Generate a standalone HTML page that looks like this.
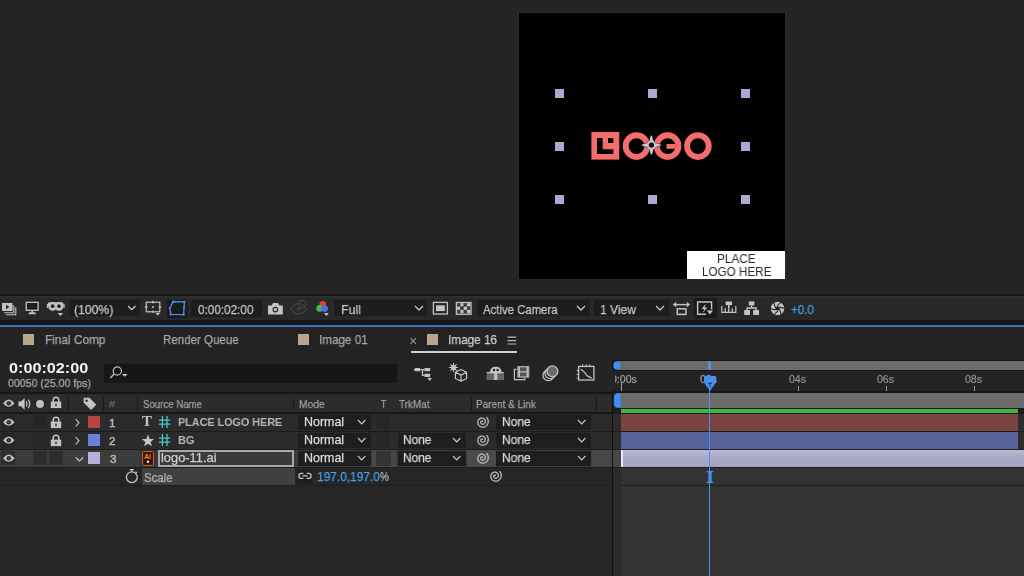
<!DOCTYPE html>
<html><head><meta charset="utf-8"><style>
html,body{margin:0;padding:0;width:1024px;height:576px;overflow:hidden;background:#242424;}
body>div,body>span,body>svg{position:absolute;display:block;}
body>span,div>span{position:absolute;display:block;white-space:pre;will-change:transform;}
</style></head><body>
<div style="left:518px;top:12px;width:268px;height:268px;background:#2a2a2a;"></div>
<div style="left:519px;top:13px;width:266px;height:266px;background:#000;"></div>
<svg style="left:588px;top:128px;" width="130" height="36" viewBox="0 0 130 36">
<g transform="translate(-588,-128)">
<rect x="591.4" y="132" width="27.85" height="27.6" fill="#f46c6c"/>
<rect x="597" y="138" width="5.7" height="16" fill="#000"/>
<rect x="597" y="149.25" width="16.3" height="4.75" fill="#000"/>
<rect x="608" y="138.2" width="5.3" height="4.8" fill="#000"/>
<circle cx="636.5" cy="146.1" r="10.85" fill="none" stroke="#f46c6c" stroke-width="5.9"/>
<circle cx="667.6" cy="146.1" r="10.85" fill="none" stroke="#f46c6c" stroke-width="5.9"/>
<rect x="666.5" y="144.0" width="9" height="4.8" fill="#f46c6c"/>
<circle cx="697.9" cy="146.1" r="10.85" fill="none" stroke="#f46c6c" stroke-width="5.9"/>
</g></svg>
<svg style="left:641px;top:135px;" width="22" height="22" viewBox="0 0 22 22">
<g transform="translate(10.4,10.1)">
<path d="M-2.40,-3.20 L-0.90,-9.50 L0.90,-9.50 L2.40,-3.20 L3.20,-2.40 L9.50,-0.90 L9.50,0.90 L3.20,2.40 L2.40,3.20 L0.90,9.50 L-0.90,9.50 L-2.40,3.20 L-3.20,2.40 L-9.50,0.90 L-9.50,-0.90 L-3.20,-2.40 Z" fill="#c9c9d4" stroke="#000" stroke-opacity="0.5" stroke-width="0.8"/>
<circle cx="0" cy="0" r="4.3" fill="#c9c9d4"/>
<circle cx="0" cy="0" r="2.7" fill="#141414"/>
</g></svg>
<div style="left:555px;top:89px;width:9px;height:9px;background:#aaaad2;"></div>
<div style="left:555px;top:142px;width:9px;height:9px;background:#aaaad2;"></div>
<div style="left:555px;top:195px;width:9px;height:9px;background:#aaaad2;"></div>
<div style="left:648px;top:89px;width:9px;height:9px;background:#aaaad2;"></div>
<div style="left:648px;top:195px;width:9px;height:9px;background:#aaaad2;"></div>
<div style="left:741px;top:89px;width:9px;height:9px;background:#aaaad2;"></div>
<div style="left:741px;top:142px;width:9px;height:9px;background:#aaaad2;"></div>
<div style="left:741px;top:195px;width:9px;height:9px;background:#aaaad2;"></div>
<div style="left:687px;top:251px;width:98px;height:28px;background:#ffffff;"></div>
<span style="left:717.26px;top:253.22px;font-family:'Liberation Sans', sans-serif;font-size:12.03px;line-height:12.03px;font-weight:400;color:#2a2a2a;transform:scaleX(0.9776);transform-origin:0 0;">PLACE</span>
<span style="left:701.86px;top:267.44px;font-family:'Liberation Sans', sans-serif;font-size:11.88px;line-height:11.88px;font-weight:400;color:#2a2a2a;transform:scaleX(0.9838);transform-origin:0 0;">LOGO HERE</span>
<div style="left:0px;top:294px;width:1024px;height:2px;background:#161616;"></div>
<div style="left:0px;top:296px;width:1024px;height:24px;background:#282828;"></div>
<div style="left:0px;top:296px;width:1024px;height:2px;background:#2e2e2e;"></div>
<div style="left:0px;top:320px;width:1024px;height:5px;background:#1a171c;"></div>
<div style="left:0px;top:325px;width:1024px;height:2px;background:#3b70ba;"></div>
<svg style="left:1px;top:302px;" width="17" height="14" viewBox="0 0 17 14">
<rect x="1" y="1" width="10.5" height="8" fill="#c4c4c4"/>
<path d="M5,2.8 L8.5,5 L5,7.2 Z" fill="#262626"/>
<path d="M12.8,3.2 V10.8 H3.2" fill="none" stroke="#c4c4c4" stroke-width="1.1"/>
<path d="M14.8,5.2 V12.8 H5.2" fill="none" stroke="#c4c4c4" stroke-width="1.1"/>
</svg>
<svg style="left:25px;top:301px;" width="15" height="14" viewBox="0 0 15 14">
<rect x="1.3" y="1.3" width="11.8" height="8" fill="#1e1e1e" stroke="#c4c4c4" stroke-width="1.3"/>
<rect x="6.4" y="9.6" width="1.6" height="1.6" fill="#c4c4c4"/>
<path d="M3.4,13.2 Q3.4,10.9 7.2,10.9 Q11,10.9 11,13.2 Z" fill="#c4c4c4"/>
</svg>
<svg style="left:46px;top:301px;" width="19" height="16" viewBox="0 0 19 16">
<rect x="1.6" y="1.2" width="16" height="4.6" rx="2" fill="#c4c4c4"/>
<circle cx="6.6" cy="5.4" r="4.3" fill="#c4c4c4"/><circle cx="13" cy="5.4" r="4.3" fill="#c4c4c4"/>
<rect x="0.9" y="3" width="1.2" height="4" rx="0.6" fill="#c4c4c4"/><rect x="17.4" y="3" width="1.2" height="4" rx="0.6" fill="#c4c4c4"/>
<circle cx="6.6" cy="5.2" r="1.9" fill="#282828"/><circle cx="13" cy="5.2" r="1.9" fill="#282828"/>
<path d="M11.6,12.1 h5.4 l-2.7,3z" fill="#c4c4c4"/>
</svg>
<div style="left:69px;top:300px;width:71px;height:16px;background:#1d1d1d;"></div>
<span style="left:74.47px;top:302.75px;font-family:'Liberation Sans', sans-serif;font-size:13.29px;line-height:13.29px;font-weight:400;color:#c9c9c9;transform:scaleX(0.9178);transform-origin:0 0;-webkit-text-stroke:0.25px #c9c9c9;">(100%)</span>
<svg style="left:126.75px;top:304.70000000000005px;" width="9.5" height="5.8" viewBox="0 0 9.5 5.8"><polyline points="1,1 4.75,4.8 8.5,1" fill="none" stroke="#c8c8c8" stroke-width="1.3"/></svg>
<svg style="left:144px;top:300px;" width="19" height="17" viewBox="0 0 19 17">
<rect x="2.3" y="2.2" width="13.5" height="9.6" fill="none" stroke="#c4c4c4" stroke-width="1.2"/>
<circle cx="9" cy="7" r="1" fill="#c4c4c4"/>
<rect x="8.3" y="0.8" width="1.4" height="2.6" fill="#c4c4c4"/><rect x="8.3" y="10.6" width="1.4" height="2.4" fill="#c4c4c4"/>
<rect x="0.8" y="6.3" width="2.6" height="1.4" fill="#c4c4c4"/><rect x="14.6" y="6.3" width="2.6" height="1.4" fill="#c4c4c4"/>
<path d="M11.6,13 h4.4 l-2.2,2.8z" fill="#c4c4c4"/>
</svg>
<div style="left:167px;top:300px;width:21px;height:18px;background:#1b1b1b;"></div>
<svg style="left:168px;top:300px;" width="19" height="17" viewBox="0 0 19 17">
<path d="M5.25,1.6 L16.4,1.9 L15.6,14.6 L2.8,14.4 L1.8,8 Z" fill="none" stroke="#4a8ff0" stroke-width="1.3" stroke-linejoin="round"/>
<circle cx="5.25" cy="1.6" r="1.2" fill="#4a8ff0"/><circle cx="16.4" cy="1.9" r="1.2" fill="#4a8ff0"/>
<circle cx="15.6" cy="14.6" r="1.2" fill="#4a8ff0"/><circle cx="2.8" cy="14.4" r="1.2" fill="#4a8ff0"/>
<circle cx="16" cy="7.5" r="1.1" fill="#4a8ff0"/><circle cx="1.8" cy="8" r="1.1" fill="#4a8ff0"/>
</svg>
<div style="left:191px;top:300px;width:71px;height:17px;background:#1d1d1d;"></div>
<span style="left:198.43px;top:302.75px;font-family:'Liberation Sans', sans-serif;font-size:13.29px;line-height:13.29px;font-weight:400;color:#c9c9c9;transform:scaleX(0.8822);transform-origin:0 0;-webkit-text-stroke:0.25px #c9c9c9;">0:00:02:00</span>
<svg style="left:267px;top:302px;" width="17" height="14" viewBox="0 0 17 14">
<path d="M1,3.4 H4.6 L6,1 H11 L12.4,3.4 H15.8 V12.5 H1 Z" fill="#c4c4c4"/>
<circle cx="8.4" cy="7.6" r="2.9" fill="#262626"/><circle cx="8.4" cy="7.6" r="1.7" fill="#c4c4c4"/>
</svg>
<svg style="left:289px;top:299px;" width="19" height="16" viewBox="0 0 19 16">
<path d="M1.5,10 Q5.5,4.8 9.5,4.8 Q13.5,4.8 17.5,10 Q13.5,15 9.5,15 Q5.5,15 1.5,10 Z" fill="none" stroke="#3e3e3e" stroke-width="1.6"/>
<circle cx="9.5" cy="10" r="2" fill="#3e3e3e"/>
<circle cx="13" cy="5" r="3.8" fill="none" stroke="#3e3e3e" stroke-width="1.6"/>
</svg>
<svg style="left:315px;top:300px;" width="16" height="17" viewBox="0 0 16 17">
<circle cx="7.7" cy="4.2" r="3.3" fill="#e83c3c"/>
<circle cx="4.6" cy="8.4" r="3.3" fill="#3cc23c"/>
<circle cx="9.6" cy="8.6" r="3.4" fill="#4d6ff0"/>
<path d="M9,13 h4.8 l-2.4,2.9z" fill="#c4c4c4"/>
</svg>
<div style="left:334px;top:300px;width:93px;height:16px;background:#1d1d1d;"></div>
<span style="left:340.61px;top:302.59px;font-family:'Liberation Sans', sans-serif;font-size:13.48px;line-height:13.48px;font-weight:400;color:#c9c9c9;transform:scaleX(0.9217);transform-origin:0 0;-webkit-text-stroke:0.25px #c9c9c9;">Full</span>
<svg style="left:413.6px;top:304.8px;" width="10" height="6" viewBox="0 0 10 6"><polyline points="1,1 5.0,5 9,1" fill="none" stroke="#c8c8c8" stroke-width="1.3"/></svg>
<svg style="left:432px;top:301px;" width="17" height="15" viewBox="0 0 17 15">
<rect x="1.4" y="1.4" width="14" height="11.6" fill="none" stroke="#c4c4c4" stroke-width="1.3"/>
<rect x="4" y="4.3" width="8.8" height="5.8" fill="#c4c4c4"/>
</svg>
<svg style="left:455px;top:301px;" width="18" height="16" viewBox="0 0 18 16">
<rect x="2.10" y="2.20" width="3.3" height="3.35" fill="#3c3c3c"/><rect x="2.10" y="5.55" width="3.3" height="3.35" fill="#c4c4c4"/><rect x="2.10" y="8.90" width="3.3" height="3.35" fill="#3c3c3c"/><rect x="5.40" y="2.20" width="3.3" height="3.35" fill="#c4c4c4"/><rect x="5.40" y="5.55" width="3.3" height="3.35" fill="#3c3c3c"/><rect x="5.40" y="8.90" width="3.3" height="3.35" fill="#c4c4c4"/><rect x="8.70" y="2.20" width="3.3" height="3.35" fill="#3c3c3c"/><rect x="8.70" y="5.55" width="3.3" height="3.35" fill="#c4c4c4"/><rect x="8.70" y="8.90" width="3.3" height="3.35" fill="#3c3c3c"/><rect x="12.00" y="2.20" width="3.3" height="3.35" fill="#c4c4c4"/><rect x="12.00" y="5.55" width="3.3" height="3.35" fill="#3c3c3c"/><rect x="12.00" y="8.90" width="3.3" height="3.35" fill="#c4c4c4"/>
<rect x="1.4" y="1.5" width="14.6" height="11.8" fill="none" stroke="#c4c4c4" stroke-width="1.3"/>
</svg>
<div style="left:477px;top:300px;width:112px;height:16px;background:#1d1d1d;"></div>
<span style="left:483.40px;top:302.59px;font-family:'Liberation Sans', sans-serif;font-size:13.48px;line-height:13.48px;font-weight:400;color:#c9c9c9;transform:scaleX(0.8444);transform-origin:0 0;-webkit-text-stroke:0.25px #c9c9c9;">Active Camera</span>
<svg style="left:575.8px;top:304.8px;" width="10" height="6" viewBox="0 0 10 6"><polyline points="1,1 5.0,5 9,1" fill="none" stroke="#c8c8c8" stroke-width="1.3"/></svg>
<div style="left:594px;top:300px;width:75px;height:16px;background:#1d1d1d;"></div>
<span style="left:599.70px;top:302.59px;font-family:'Liberation Sans', sans-serif;font-size:13.48px;line-height:13.48px;font-weight:400;color:#c9c9c9;transform:scaleX(0.8924);transform-origin:0 0;-webkit-text-stroke:0.25px #c9c9c9;">1 View</span>
<svg style="left:654.7px;top:304.8px;" width="10" height="6" viewBox="0 0 10 6"><polyline points="1,1 5.0,5 9,1" fill="none" stroke="#c8c8c8" stroke-width="1.3"/></svg>
<svg style="left:672px;top:301px;" width="20" height="16" viewBox="0 0 20 16">
<path d="M3,3.6 H16" stroke="#c4c4c4" stroke-width="1.4"/>
<path d="M0.8,3.6 L4.2,0.9 V6.3 Z M18.2,3.6 L14.8,0.9 V6.3 Z" fill="#c4c4c4"/>
<rect x="5.3" y="7.8" width="8.6" height="5.6" fill="none" stroke="#c4c4c4" stroke-width="1.5"/>
</svg>
<div style="left:694px;top:298px;width:23px;height:20px;background:#1b1b1b;"></div>
<svg style="left:696px;top:300px;" width="18" height="16" viewBox="0 0 18 16">
<path d="M15.6,9.5 V2 H1.6 V14.2 H10" fill="none" stroke="#c4c4c4" stroke-width="1.4"/>
<path d="M9.8,3.8 L5.6,9 H8.4 L6.8,12.8 L11.4,7.4 H8.6 Z" fill="#c4c4c4"/>
<path d="M10.8,10.6 h6.2 l-3.1,3.8z" fill="#c4c4c4"/>
</svg>
<svg style="left:720px;top:300px;" width="18" height="14" viewBox="0 0 18 14">
<path d="M1.8,6 V12.3 H15.8 V6" fill="none" stroke="#c4c4c4" stroke-width="1.2"/>
<rect x="5.6" y="1.5" width="6.4" height="3.6" fill="#c4c4c4"/>
<rect x="8" y="5" width="1.6" height="3" fill="#c4c4c4"/>
<rect x="4.6" y="8.2" width="1.3" height="4" fill="#c4c4c4"/><rect x="8.1" y="8.2" width="1.3" height="4" fill="#c4c4c4"/><rect x="11.6" y="8.2" width="1.3" height="4" fill="#c4c4c4"/>
</svg>
<svg style="left:743px;top:300px;" width="18" height="17" viewBox="0 0 18 17">
<rect x="5.8" y="1.4" width="5.6" height="4" fill="#c4c4c4"/>
<path d="M8.6,5.4 V8 M4,10 V8 H13.2 V10" fill="none" stroke="#c4c4c4" stroke-width="1.3"/>
<rect x="1.2" y="10" width="5.8" height="5" fill="#c4c4c4"/><rect x="10.2" y="10" width="5.8" height="5" fill="#c4c4c4"/>
</svg>
<svg style="left:770px;top:301px;" width="16" height="16" viewBox="0 0 16 16">
<circle cx="7.5" cy="7.5" r="6.7" fill="#c4c4c4"/>
<path d="M9.43,8.02 Q10.83,10.68 10.90,13.39" fill="none" stroke="#262626" stroke-width="1.1"/><path d="M8.02,9.43 Q6.41,11.97 4.10,13.39" fill="none" stroke="#262626" stroke-width="1.1"/><path d="M6.09,8.91 Q3.09,8.80 0.70,7.50" fill="none" stroke="#262626" stroke-width="1.1"/><path d="M5.57,6.98 Q4.17,4.32 4.10,1.61" fill="none" stroke="#262626" stroke-width="1.1"/><path d="M6.98,5.57 Q8.59,3.03 10.90,1.61" fill="none" stroke="#262626" stroke-width="1.1"/><path d="M8.91,6.09 Q11.91,6.20 14.30,7.50" fill="none" stroke="#262626" stroke-width="1.1"/>
<circle cx="7.5" cy="7.5" r="2.1" fill="#262626"/>
</svg>
<span style="left:791.22px;top:302.75px;font-family:'Liberation Sans', sans-serif;font-size:13.29px;line-height:13.29px;font-weight:400;color:#4a9ff0;transform:scaleX(0.8682);transform-origin:0 0;-webkit-text-stroke:0.25px #4a9ff0;">+0.0</span>
<div style="left:0px;top:327px;width:1024px;height:38px;background:#232323;"></div>
<div style="left:23px;top:334px;width:11px;height:11px;background:#b9a78b;"></div>
<span style="left:45.05px;top:333.60px;font-family:'Liberation Sans', sans-serif;font-size:12.75px;line-height:12.75px;font-weight:400;color:#a9a9a9;transform:scaleX(0.9271);transform-origin:0 0;-webkit-text-stroke:0.25px #a9a9a9;">Final Comp</span>
<span style="left:163.48px;top:333.60px;font-family:'Liberation Sans', sans-serif;font-size:12.75px;line-height:12.75px;font-weight:400;color:#a9a9a9;transform:scaleX(0.9059);transform-origin:0 0;-webkit-text-stroke:0.25px #a9a9a9;">Render Queue</span>
<div style="left:298px;top:334px;width:11px;height:11px;background:#b9a78b;"></div>
<span style="left:319.25px;top:333.60px;font-family:'Liberation Sans', sans-serif;font-size:12.75px;line-height:12.75px;font-weight:400;color:#a9a9a9;transform:scaleX(0.9172);transform-origin:0 0;-webkit-text-stroke:0.25px #a9a9a9;">Image 01</span>
<svg style="left:409px;top:337px;" width="9" height="8" viewBox="0 0 9 8"><path d="M1.5,1.2 L7,6.8 M7,1.2 L1.5,6.8" stroke="#9a9a9a" stroke-width="1.1"/></svg>
<div style="left:427px;top:334px;width:11px;height:11px;background:#b9a78b;"></div>
<span style="left:448.34px;top:333.60px;font-family:'Liberation Sans', sans-serif;font-size:12.75px;line-height:12.75px;font-weight:400;color:#d0d0d0;transform:scaleX(0.9219);transform-origin:0 0;-webkit-text-stroke:0.25px #d0d0d0;">Image 16</span>
<svg style="left:507px;top:336px;" width="10" height="9" viewBox="0 0 10 9"><path d="M0.5,1.2 H9.2 M0.5,4.6 H9.2 M0.5,8 H9.2" stroke="#b8b8b8" stroke-width="1.2"/></svg>
<div style="left:411px;top:351px;width:106px;height:2px;background:#cfcfcf;"></div>
<span style="left:9.35px;top:360.18px;font-family:'Liberation Sans', sans-serif;font-size:15.14px;line-height:15.14px;font-weight:700;color:#f2f2f2;transform:scaleX(1.0709);transform-origin:0 0;">0:00:02:00</span>
<span style="left:7.58px;top:377.70px;font-family:'Liberation Sans', sans-serif;font-size:11.57px;line-height:11.57px;font-weight:400;color:#ababab;transform:scaleX(0.9161);transform-origin:0 0;-webkit-text-stroke:0.25px #ababab;">00050 (25.00 fps)</span>
<div style="left:104px;top:364px;width:293px;height:19px;background:#161616;"></div>
<svg style="left:108px;top:365px;" width="22" height="16" viewBox="0 0 22 16">
<circle cx="9.3" cy="6" r="4.1" fill="none" stroke="#bdbdbd" stroke-width="1.2"/>
<path d="M6.3,9 L2.3,13" stroke="#bdbdbd" stroke-width="1.5"/>
<path d="M13.6,9 h6.2 l-3.1,2.7z" fill="#bdbdbd"/>
</svg>
<svg style="left:412px;top:365px;" width="22" height="18" viewBox="0 0 22 18">
<path d="M1.6,4.7 L3.4,3.1 H8 V6.3 H3.4 Z" fill="#c4c4c4"/>
<path d="M8,4.7 H12.4 M10.5,4.7 V10.3 H12.4" fill="none" stroke="#c4c4c4" stroke-width="1.3"/>
<rect x="12.4" y="3.1" width="5.8" height="3.2" rx="0.6" fill="#c4c4c4"/>
<rect x="12.4" y="8.7" width="5.8" height="3.2" rx="0.6" fill="#c4c4c4"/>
<path d="M15.4,13 h4.6 l-2.3,3z" fill="#c4c4c4"/>
</svg>
<svg style="left:448px;top:362px;" width="21" height="21" viewBox="0 0 21 21">
<g stroke="#c4c4c4" stroke-width="1.1"><path d="M5.5,1 V10 M1,5.5 H10 M2.3,2.3 L8.7,8.7 M8.7,2.3 L2.3,8.7"/></g>
<circle cx="5.5" cy="5.5" r="2.6" fill="#c4c4c4"/>
<path d="M13,7.5 L18.6,10.3 V16.5 L13,19.3 L7.4,16.5 V10.3 Z M7.4,10.3 L13,13.1 L18.6,10.3 M13,13.1 V19.3" fill="#232323" stroke="#c4c4c4" stroke-width="1.2" stroke-linejoin="round"/>
</svg>
<svg style="left:485px;top:365px;" width="20" height="17" viewBox="0 0 20 17">
<path d="M5,7.6 Q5,1.8 10.8,1.8 Q16.6,1.8 16.6,7.6 Z" fill="#c4c4c4"/>
<circle cx="9" cy="5" r="1.2" fill="#232323"/><circle cx="12.6" cy="5" r="1.2" fill="#232323"/>
<rect x="1.8" y="7" width="17" height="1.6" fill="#c4c4c4"/>
<rect x="1.6" y="9.2" width="17.4" height="5.8" fill="#6e6e6e"/>
<path d="M3,9.2 V15 M5,9.2 V15 M7,9.2 V15 M14.6,9.2 V15 M16.6,9.2 V15" stroke="#5a5a5a" stroke-width="0.8"/>
<rect x="9.2" y="7.6" width="3" height="7.4" fill="#c4c4c4"/>
</svg>
<svg style="left:513px;top:364px;" width="19" height="18" viewBox="0 0 19 18">
<path d="M3.3,5.3 H1.4 V15.6 H11.8 V14" fill="none" stroke="#c4c4c4" stroke-width="1.2"/>
<rect x="4.3" y="2.2" width="12" height="11.4" fill="#c4c4c4"/>
<rect x="7" y="3.3" width="6.6" height="4" fill="#555"/><rect x="7" y="8.5" width="6.6" height="4" fill="#555"/>
<path d="M5.2,3.6 v9 M15.3,3.6 v9" stroke="#666" stroke-width="0.9" stroke-dasharray="1,1"/>
</svg>
<svg style="left:541px;top:364px;" width="19" height="18" viewBox="0 0 19 18">
<circle cx="7.4" cy="11.3" r="5.4" fill="#232323" stroke="#c4c4c4" stroke-width="1.3"/>
<circle cx="9.4" cy="9.3" r="5.4" fill="#232323" stroke="#c4c4c4" stroke-width="1.3"/>
<circle cx="11.4" cy="7.3" r="5.4" fill="#6b6b6b" stroke="#c4c4c4" stroke-width="1.3"/>
</svg>
<svg style="left:576px;top:363px;" width="21" height="19" viewBox="0 0 21 19">
<rect x="2.6" y="3.4" width="15.3" height="13.6" fill="none" stroke="#c4c4c4" stroke-width="1.3"/>
<path d="M4.6,6.6 C9,6.6 9.5,14.8 15.8,14.8" fill="none" stroke="#c4c4c4" stroke-width="1.2"/>
<path d="M6.6,1.2 v2 M10.2,1.2 v2 M13.8,1.2 v2 M0.6,7.6 h2 M0.6,11.4 h2 M0.6,15 h2" stroke="#c4c4c4" stroke-width="1"/>
</svg>
<div style="left:0px;top:392px;width:612px;height:2px;background:#161616;"></div>
<div style="left:0px;top:394px;width:612px;height:18px;background:#2b2b2b;"></div>
<div style="left:0px;top:412px;width:612px;height:2px;background:#161616;"></div>
<svg style="left:1px;top:398px;" width="15" height="11" viewBox="0 0 15 11">
<path d="M2,5.2 Q5,1.6 7.8,1.6 Q10.6,1.6 13.6,5.2 Q10.6,8.8 7.8,8.8 Q5,8.8 2,5.2 Z" fill="#c4c4c4"/>
<circle cx="7.8" cy="5.2" r="2.3" fill="#2b2b2b"/><circle cx="7.8" cy="5.2" r="0.6" fill="#777"/>
</svg>
<svg style="left:17px;top:397px;" width="15" height="14" viewBox="0 0 15 14">
<path d="M1.5,4.6 H4 L7.6,1 V12.8 L4,9.2 H1.5 Z" fill="#c4c4c4"/>
<path d="M9.2,4.4 Q10.8,6.9 9.2,9.4 M11.2,2.6 Q14.2,6.9 11.2,11.2" fill="none" stroke="#c4c4c4" stroke-width="1.2"/>
</svg>
<svg style="left:35px;top:399px;" width="10" height="10" viewBox="0 0 10 10"><circle cx="5" cy="4.9" r="3.9" fill="#c4c4c4"/></svg>
<svg style="left:50px;top:396px;" width="12" height="13" viewBox="0 0 12 13">
<path d="M3.2,6 V4.1 Q3.2,1.2 6,1.2 Q8.8,1.2 8.8,4.1 V6" fill="none" stroke="#c4c4c4" stroke-width="1.5"/>
<rect x="0.8" y="5.6" width="10.4" height="6.5" fill="#c4c4c4"/>
<rect x="5.3" y="7.6" width="1.4" height="2.6" fill="#2b2b2b"/>
</svg>
<div style="left:68px;top:397px;width:1px;height:14px;background:#1a1a1a;"></div>
<svg style="left:82px;top:396px;" width="16" height="15" viewBox="0 0 16 15">
<path d="M1.6,1.8 H7.4 L14.3,8.7 L9,14 L1.6,6.6 Z" fill="#c4c4c4"/>
<circle cx="4.6" cy="4.8" r="1.2" fill="#2b2b2b"/>
</svg>
<div style="left:103px;top:397px;width:1px;height:14px;background:#1a1a1a;"></div>
<span style="left:108.64px;top:399.55px;font-family:'Liberation Sans', sans-serif;font-size:9.28px;line-height:9.28px;font-weight:400;color:#6a6a6a;transform:scaleX(1.2463);transform-origin:0 0;-webkit-text-stroke:0.25px #6a6a6a;">#</span>
<div style="left:137px;top:397px;width:1px;height:14px;background:#1a1a1a;"></div>
<span style="left:143.32px;top:398.66px;font-family:'Liberation Sans', sans-serif;font-size:11.45px;line-height:11.45px;font-weight:400;color:#a2a2a2;transform:scaleX(0.8430);transform-origin:0 0;-webkit-text-stroke:0.25px #a2a2a2;">Source Name</span>
<div style="left:293px;top:397px;width:1px;height:14px;background:#1a1a1a;"></div>
<span style="left:299.18px;top:398.66px;font-family:'Liberation Sans', sans-serif;font-size:11.45px;line-height:11.45px;font-weight:400;color:#a2a2a2;transform:scaleX(0.8973);transform-origin:0 0;-webkit-text-stroke:0.25px #a2a2a2;">Mode</span>
<span style="left:381.02px;top:398.66px;font-family:'Liberation Sans', sans-serif;font-size:11.45px;line-height:11.45px;font-weight:400;color:#a2a2a2;transform:scaleX(0.7662);transform-origin:0 0;-webkit-text-stroke:0.25px #a2a2a2;">T</span>
<span style="left:399.20px;top:398.66px;font-family:'Liberation Sans', sans-serif;font-size:11.45px;line-height:11.45px;font-weight:400;color:#a2a2a2;transform:scaleX(0.8705);transform-origin:0 0;-webkit-text-stroke:0.25px #a2a2a2;">TrkMat</span>
<div style="left:471px;top:397px;width:1px;height:14px;background:#1a1a1a;"></div>
<span style="left:476.10px;top:398.66px;font-family:'Liberation Sans', sans-serif;font-size:11.45px;line-height:11.45px;font-weight:400;color:#a2a2a2;transform:scaleX(0.8712);transform-origin:0 0;-webkit-text-stroke:0.25px #a2a2a2;">Parent &amp; Link</span>
<div style="left:596px;top:397px;width:1px;height:14px;background:#1a1a1a;"></div>
<div style="left:0px;top:414px;width:612px;height:17px;background:#2b2b2b;"></div>
<div style="left:0px;top:431px;width:612px;height:1px;background:#1c1c1c;"></div>
<div style="left:1px;top:415px;width:14px;height:14px;background:#262626;"></div>
<svg style="left:1px;top:417px;" width="15" height="11" viewBox="0 0 15 11">
<path d="M2,5.2 Q5,1.6 7.8,1.6 Q10.6,1.6 13.6,5.2 Q10.6,8.8 7.8,8.8 Q5,8.8 2,5.2 Z" fill="#c4c4c4"/>
<circle cx="7.8" cy="5.2" r="2.3" fill="#2b2b2b"/><circle cx="7.8" cy="5.2" r="0.6" fill="#777"/>
</svg>
<div style="left:33px;top:415px;width:14px;height:14px;background:#262626;"></div>
<svg style="left:50px;top:416px;" width="12" height="13" viewBox="0 0 12 13">
<path d="M3.2,6 V4.1 Q3.2,1.2 6,1.2 Q8.8,1.2 8.8,4.1 V6" fill="none" stroke="#c4c4c4" stroke-width="1.5"/>
<rect x="0.8" y="5.6" width="10.4" height="6.5" fill="#c4c4c4"/>
<rect x="5.3" y="7.6" width="1.4" height="2.6" fill="#2b2b2b"/>
</svg>
<svg style="left:74px;top:418px;" width="7" height="10" viewBox="0 0 7 10"><polyline points="1.7,1.2 5,4.8 1.7,8.4" fill="none" stroke="#c4c4c4" stroke-width="1.1"/></svg>
<div style="left:88px;top:416px;width:12px;height:12px;background:#b84343;"></div>
<span style="left:109.12px;top:416.88px;font-family:'Liberation Sans', sans-serif;font-size:11.71px;line-height:11.71px;font-weight:400;color:#b8b8b8;-webkit-text-stroke:0.45px #b8b8b8;">1</span>
<span style="left:142.28px;top:413.83px;font-family:'Liberation Serif', serif;font-size:14.96px;line-height:14.96px;font-weight:700;color:#c4c4c4;transform:scaleX(0.9894);transform-origin:0 0;">T</span>
<svg style="left:158px;top:415px;" width="13" height="14" viewBox="0 0 13 14"><path d="M4.4,1 V13 M9,1 V13 M0.8,5.2 H12.2 M0.8,9.2 H12.2" stroke="#48c9c9" stroke-width="1.25"/></svg>
<span style="left:178.05px;top:415.86px;font-family:'Liberation Sans', sans-serif;font-size:11.74px;line-height:11.74px;font-weight:700;color:#b8b8b8;transform:scaleX(0.9186);transform-origin:0 0;">PLACE LOGO HERE</span>
<div style="left:298px;top:415px;width:73px;height:15px;background:#1e1e1e;"></div>
<span style="left:303.75px;top:415.95px;font-family:'Liberation Sans', sans-serif;font-size:12.46px;line-height:12.46px;font-weight:400;color:#dddddd;-webkit-text-stroke:0.25px #dddddd;">Normal</span>
<svg style="left:357.40000000000003px;top:418.90000000000003px;" width="9.4" height="5.8" viewBox="0 0 9.4 5.8"><polyline points="1,1 4.7,4.8 8.4,1" fill="none" stroke="#c8c8c8" stroke-width="1.2"/></svg>
<div style="left:376px;top:415px;width:14px;height:14px;background:#262626;"></div>
<svg style="left:475px;top:415px;" width="15" height="15" viewBox="0 0 15 15">
<path d="M7.57,6.37 L7.52,6.28 L7.46,6.20 L7.38,6.13 L7.28,6.07 L7.18,6.02 L7.05,5.99 L6.92,5.97 L6.79,5.98 L6.64,6.00 L6.50,6.05 L6.36,6.11 L6.22,6.21 L6.09,6.32 L5.98,6.45 L5.88,6.60 L5.79,6.78 L5.73,6.96 L5.70,7.16 L5.69,7.37 L5.70,7.59 L5.75,7.81 L5.83,8.03 L5.94,8.24 L6.07,8.44 L6.24,8.63 L6.44,8.79 L6.66,8.94 L6.90,9.06 L7.17,9.15 L7.45,9.21 L7.74,9.23 L8.03,9.21 L8.34,9.15 L8.63,9.06 L8.92,8.93 L9.20,8.75 L9.46,8.54 L9.69,8.29 L9.89,8.01 L10.07,7.70 L10.20,7.37 L10.29,7.01 L10.34,6.64 L10.34,6.26 L10.29,5.87 L10.20,5.49 L10.05,5.12 L9.86,4.76 L9.61,4.42 L9.33,4.11 L9.00,3.83 L8.63,3.59 L8.23,3.40 L7.81,3.26 L7.36,3.17 L6.90,3.13 L6.43,3.15 L5.95,3.23 L5.49,3.37 L5.04,3.58 L4.61,3.83 L4.22,4.15 L3.86,4.51 L3.54,4.92 L3.27,5.38 L3.06,5.87 L2.91,6.39 L2.82,6.93 L2.80,7.48 L2.85,8.04 L2.97,8.60 L3.16,9.14 L3.42,9.66 L3.75,10.15 L4.13,10.61 L4.58,11.01 L5.08,11.37 L5.62,11.66 L6.20,11.88 L6.81,12.04 L7.45,12.11 L8.09,12.11 L8.74,12.03 L9.38,11.87 L10.00,11.63 L10.59,11.31 L11.14,10.92 L11.65,10.45 L12.10,9.92 L12.48,9.34 L12.80,8.71 L13.03,8.03 L13.19,7.33 L13.25,6.60 L13.23,5.87 L13.11,5.13 L12.90,4.41 L12.60,3.72 L12.22,3.06 L11.75,2.45" fill="none" stroke="#bdbdbd" stroke-width="1.25" stroke-linecap="round"/>
</svg>
<div style="left:496px;top:415px;width:95px;height:15px;background:#1e1e1e;"></div>
<span style="left:502.04px;top:415.95px;font-family:'Liberation Sans', sans-serif;font-size:12.46px;line-height:12.46px;font-weight:400;color:#dddddd;transform:scaleX(0.9653);transform-origin:0 0;-webkit-text-stroke:0.25px #dddddd;">None</span>
<svg style="left:577.1999999999999px;top:418.90000000000003px;" width="9.4" height="5.8" viewBox="0 0 9.4 5.8"><polyline points="1,1 4.7,4.8 8.4,1" fill="none" stroke="#c8c8c8" stroke-width="1.2"/></svg>
<div style="left:0px;top:432px;width:612px;height:17px;background:#2b2b2b;"></div>
<div style="left:0px;top:449px;width:612px;height:1px;background:#1c1c1c;"></div>
<div style="left:1px;top:433px;width:14px;height:14px;background:#262626;"></div>
<svg style="left:1px;top:435px;" width="15" height="11" viewBox="0 0 15 11">
<path d="M2,5.2 Q5,1.6 7.8,1.6 Q10.6,1.6 13.6,5.2 Q10.6,8.8 7.8,8.8 Q5,8.8 2,5.2 Z" fill="#c4c4c4"/>
<circle cx="7.8" cy="5.2" r="2.3" fill="#2b2b2b"/><circle cx="7.8" cy="5.2" r="0.6" fill="#777"/>
</svg>
<div style="left:33px;top:433px;width:14px;height:14px;background:#262626;"></div>
<svg style="left:50px;top:434px;" width="12" height="13" viewBox="0 0 12 13">
<path d="M3.2,6 V4.1 Q3.2,1.2 6,1.2 Q8.8,1.2 8.8,4.1 V6" fill="none" stroke="#c4c4c4" stroke-width="1.5"/>
<rect x="0.8" y="5.6" width="10.4" height="6.5" fill="#c4c4c4"/>
<rect x="5.3" y="7.6" width="1.4" height="2.6" fill="#2b2b2b"/>
</svg>
<svg style="left:74px;top:436px;" width="7" height="10" viewBox="0 0 7 10"><polyline points="1.7,1.2 5,4.8 1.7,8.4" fill="none" stroke="#c4c4c4" stroke-width="1.1"/></svg>
<div style="left:88px;top:434px;width:12px;height:12px;background:#6b7fe0;"></div>
<span style="left:109.41px;top:434.88px;font-family:'Liberation Sans', sans-serif;font-size:11.71px;line-height:11.71px;font-weight:400;color:#b8b8b8;-webkit-text-stroke:0.45px #b8b8b8;">2</span>
<svg style="left:141px;top:434px;" width="14" height="13" viewBox="0 0 14 13"><path d="M7,0.6 L8.7,4.9 L13.2,5 L9.6,7.9 L10.9,12.3 L7,9.7 L3.1,12.3 L4.4,7.9 L0.8,5 L5.3,4.9 Z" fill="#c4c4c4"/></svg>
<svg style="left:158px;top:433px;" width="13" height="14" viewBox="0 0 13 14"><path d="M4.4,1 V13 M9,1 V13 M0.8,5.2 H12.2 M0.8,9.2 H12.2" stroke="#48c9c9" stroke-width="1.25"/></svg>
<span style="left:178.04px;top:433.86px;font-family:'Liberation Sans', sans-serif;font-size:11.74px;line-height:11.74px;font-weight:700;color:#b8b8b8;transform:scaleX(0.9327);transform-origin:0 0;">BG</span>
<div style="left:298px;top:433px;width:73px;height:15px;background:#1e1e1e;"></div>
<span style="left:303.75px;top:433.95px;font-family:'Liberation Sans', sans-serif;font-size:12.46px;line-height:12.46px;font-weight:400;color:#dddddd;-webkit-text-stroke:0.25px #dddddd;">Normal</span>
<svg style="left:357.40000000000003px;top:436.90000000000003px;" width="9.4" height="5.8" viewBox="0 0 9.4 5.8"><polyline points="1,1 4.7,4.8 8.4,1" fill="none" stroke="#c8c8c8" stroke-width="1.2"/></svg>
<div style="left:376px;top:433px;width:14px;height:14px;background:#262626;"></div>
<div style="left:398px;top:433px;width:68px;height:15px;background:#1e1e1e;"></div>
<span style="left:402.80px;top:433.95px;font-family:'Liberation Sans', sans-serif;font-size:12.46px;line-height:12.46px;font-weight:400;color:#dddddd;transform:scaleX(0.9511);transform-origin:0 0;-webkit-text-stroke:0.25px #dddddd;">None</span>
<svg style="left:452.40000000000003px;top:436.90000000000003px;" width="9.4" height="5.8" viewBox="0 0 9.4 5.8"><polyline points="1,1 4.7,4.8 8.4,1" fill="none" stroke="#c8c8c8" stroke-width="1.2"/></svg>
<svg style="left:475px;top:433px;" width="15" height="15" viewBox="0 0 15 15">
<path d="M7.57,6.37 L7.52,6.28 L7.46,6.20 L7.38,6.13 L7.28,6.07 L7.18,6.02 L7.05,5.99 L6.92,5.97 L6.79,5.98 L6.64,6.00 L6.50,6.05 L6.36,6.11 L6.22,6.21 L6.09,6.32 L5.98,6.45 L5.88,6.60 L5.79,6.78 L5.73,6.96 L5.70,7.16 L5.69,7.37 L5.70,7.59 L5.75,7.81 L5.83,8.03 L5.94,8.24 L6.07,8.44 L6.24,8.63 L6.44,8.79 L6.66,8.94 L6.90,9.06 L7.17,9.15 L7.45,9.21 L7.74,9.23 L8.03,9.21 L8.34,9.15 L8.63,9.06 L8.92,8.93 L9.20,8.75 L9.46,8.54 L9.69,8.29 L9.89,8.01 L10.07,7.70 L10.20,7.37 L10.29,7.01 L10.34,6.64 L10.34,6.26 L10.29,5.87 L10.20,5.49 L10.05,5.12 L9.86,4.76 L9.61,4.42 L9.33,4.11 L9.00,3.83 L8.63,3.59 L8.23,3.40 L7.81,3.26 L7.36,3.17 L6.90,3.13 L6.43,3.15 L5.95,3.23 L5.49,3.37 L5.04,3.58 L4.61,3.83 L4.22,4.15 L3.86,4.51 L3.54,4.92 L3.27,5.38 L3.06,5.87 L2.91,6.39 L2.82,6.93 L2.80,7.48 L2.85,8.04 L2.97,8.60 L3.16,9.14 L3.42,9.66 L3.75,10.15 L4.13,10.61 L4.58,11.01 L5.08,11.37 L5.62,11.66 L6.20,11.88 L6.81,12.04 L7.45,12.11 L8.09,12.11 L8.74,12.03 L9.38,11.87 L10.00,11.63 L10.59,11.31 L11.14,10.92 L11.65,10.45 L12.10,9.92 L12.48,9.34 L12.80,8.71 L13.03,8.03 L13.19,7.33 L13.25,6.60 L13.23,5.87 L13.11,5.13 L12.90,4.41 L12.60,3.72 L12.22,3.06 L11.75,2.45" fill="none" stroke="#bdbdbd" stroke-width="1.25" stroke-linecap="round"/>
</svg>
<div style="left:496px;top:433px;width:95px;height:15px;background:#1e1e1e;"></div>
<span style="left:502.04px;top:433.95px;font-family:'Liberation Sans', sans-serif;font-size:12.46px;line-height:12.46px;font-weight:400;color:#dddddd;transform:scaleX(0.9653);transform-origin:0 0;-webkit-text-stroke:0.25px #dddddd;">None</span>
<svg style="left:577.1999999999999px;top:436.90000000000003px;" width="9.4" height="5.8" viewBox="0 0 9.4 5.8"><polyline points="1,1 4.7,4.8 8.4,1" fill="none" stroke="#c8c8c8" stroke-width="1.2"/></svg>
<div style="left:0px;top:450px;width:612px;height:17px;background:#3c3c3c;"></div>
<div style="left:0px;top:467px;width:612px;height:1px;background:#1c1c1c;"></div>
<div style="left:1px;top:451px;width:14px;height:14px;background:#2e2e2e;"></div>
<svg style="left:1px;top:453px;" width="15" height="11" viewBox="0 0 15 11">
<path d="M2,5.2 Q5,1.6 7.8,1.6 Q10.6,1.6 13.6,5.2 Q10.6,8.8 7.8,8.8 Q5,8.8 2,5.2 Z" fill="#c4c4c4"/>
<circle cx="7.8" cy="5.2" r="2.3" fill="#2b2b2b"/><circle cx="7.8" cy="5.2" r="0.6" fill="#777"/>
</svg>
<div style="left:33px;top:451px;width:14px;height:14px;background:#2e2e2e;"></div>
<div style="left:49px;top:451px;width:14px;height:14px;background:#2e2e2e;"></div>
<svg style="left:74px;top:456px;" width="11" height="7" viewBox="0 0 11 7"><polyline points="1.8,1.5 5.5,5 9.2,1.5" fill="none" stroke="#c4c4c4" stroke-width="1.2"/></svg>
<div style="left:88px;top:452px;width:12px;height:12px;background:#b3b3d9;"></div>
<span style="left:109.53px;top:452.88px;font-family:'Liberation Sans', sans-serif;font-size:11.71px;line-height:11.71px;font-weight:400;color:#b8b8b8;-webkit-text-stroke:0.45px #b8b8b8;">3</span>
<div style="left:140px;top:450px;width:17px;height:17px;background:#353535;"></div>
<svg style="left:142px;top:451px;" width="12" height="15" viewBox="0 0 12 15">
<rect x="0.6" y="0.6" width="10.8" height="13.8" rx="1" fill="#3d0f0f" stroke="#c86a1e" stroke-width="1"/>
<text x="2.2" y="8.2" font-family="Liberation Sans" font-size="6.5" font-weight="700" fill="#f09a2a">Ai</text>
<circle cx="6" cy="10.8" r="1.3" fill="#e0e0e0"/>
</svg>
<div style="left:158px;top:450px;width:136px;height:17px;background:#a8a8a8;"></div>
<div style="left:160px;top:452px;width:132px;height:12.5px;background:#3a3a3a;"></div>
<span style="left:161.06px;top:452.26px;font-family:'Liberation Sans', sans-serif;font-size:12.69px;line-height:12.69px;font-weight:400;color:#d0d0d0;transform:scaleX(1.0131);transform-origin:0 0;-webkit-text-stroke:0.25px #d0d0d0;">logo-11.ai</span>
<div style="left:298px;top:451px;width:73px;height:15px;background:#1e1e1e;"></div>
<span style="left:303.75px;top:451.95px;font-family:'Liberation Sans', sans-serif;font-size:12.46px;line-height:12.46px;font-weight:400;color:#dddddd;-webkit-text-stroke:0.25px #dddddd;">Normal</span>
<svg style="left:357.40000000000003px;top:454.90000000000003px;" width="9.4" height="5.8" viewBox="0 0 9.4 5.8"><polyline points="1,1 4.7,4.8 8.4,1" fill="none" stroke="#c8c8c8" stroke-width="1.2"/></svg>
<div style="left:372px;top:450px;width:24px;height:17px;background:#474747;"></div>
<div style="left:376px;top:451px;width:15px;height:15px;background:#333333;"></div>
<div style="left:398px;top:451px;width:68px;height:15px;background:#1e1e1e;"></div>
<span style="left:402.80px;top:451.95px;font-family:'Liberation Sans', sans-serif;font-size:12.46px;line-height:12.46px;font-weight:400;color:#dddddd;transform:scaleX(0.9511);transform-origin:0 0;-webkit-text-stroke:0.25px #dddddd;">None</span>
<svg style="left:452.40000000000003px;top:454.90000000000003px;" width="9.4" height="5.8" viewBox="0 0 9.4 5.8"><polyline points="1,1 4.7,4.8 8.4,1" fill="none" stroke="#c8c8c8" stroke-width="1.2"/></svg>
<div style="left:467px;top:450px;width:29px;height:17px;background:#4a4a4a;"></div>
<svg style="left:475px;top:451px;" width="15" height="15" viewBox="0 0 15 15">
<path d="M7.57,6.37 L7.52,6.28 L7.46,6.20 L7.38,6.13 L7.28,6.07 L7.18,6.02 L7.05,5.99 L6.92,5.97 L6.79,5.98 L6.64,6.00 L6.50,6.05 L6.36,6.11 L6.22,6.21 L6.09,6.32 L5.98,6.45 L5.88,6.60 L5.79,6.78 L5.73,6.96 L5.70,7.16 L5.69,7.37 L5.70,7.59 L5.75,7.81 L5.83,8.03 L5.94,8.24 L6.07,8.44 L6.24,8.63 L6.44,8.79 L6.66,8.94 L6.90,9.06 L7.17,9.15 L7.45,9.21 L7.74,9.23 L8.03,9.21 L8.34,9.15 L8.63,9.06 L8.92,8.93 L9.20,8.75 L9.46,8.54 L9.69,8.29 L9.89,8.01 L10.07,7.70 L10.20,7.37 L10.29,7.01 L10.34,6.64 L10.34,6.26 L10.29,5.87 L10.20,5.49 L10.05,5.12 L9.86,4.76 L9.61,4.42 L9.33,4.11 L9.00,3.83 L8.63,3.59 L8.23,3.40 L7.81,3.26 L7.36,3.17 L6.90,3.13 L6.43,3.15 L5.95,3.23 L5.49,3.37 L5.04,3.58 L4.61,3.83 L4.22,4.15 L3.86,4.51 L3.54,4.92 L3.27,5.38 L3.06,5.87 L2.91,6.39 L2.82,6.93 L2.80,7.48 L2.85,8.04 L2.97,8.60 L3.16,9.14 L3.42,9.66 L3.75,10.15 L4.13,10.61 L4.58,11.01 L5.08,11.37 L5.62,11.66 L6.20,11.88 L6.81,12.04 L7.45,12.11 L8.09,12.11 L8.74,12.03 L9.38,11.87 L10.00,11.63 L10.59,11.31 L11.14,10.92 L11.65,10.45 L12.10,9.92 L12.48,9.34 L12.80,8.71 L13.03,8.03 L13.19,7.33 L13.25,6.60 L13.23,5.87 L13.11,5.13 L12.90,4.41 L12.60,3.72 L12.22,3.06 L11.75,2.45" fill="none" stroke="#bdbdbd" stroke-width="1.25" stroke-linecap="round"/>
</svg>
<div style="left:496px;top:451px;width:95px;height:15px;background:#1e1e1e;"></div>
<span style="left:502.04px;top:451.95px;font-family:'Liberation Sans', sans-serif;font-size:12.46px;line-height:12.46px;font-weight:400;color:#dddddd;transform:scaleX(0.9653);transform-origin:0 0;-webkit-text-stroke:0.25px #dddddd;">None</span>
<svg style="left:577.1999999999999px;top:454.90000000000003px;" width="9.4" height="5.8" viewBox="0 0 9.4 5.8"><polyline points="1,1 4.7,4.8 8.4,1" fill="none" stroke="#c8c8c8" stroke-width="1.2"/></svg>
<div style="left:591px;top:450px;width:21px;height:17px;background:#474747;"></div>
<div style="left:0px;top:468px;width:612px;height:17px;background:#262626;"></div>
<div style="left:0px;top:485px;width:612px;height:1px;background:#1e1e1e;"></div>
<svg style="left:124px;top:468px;" width="16" height="16" viewBox="0 0 16 16">
<circle cx="7.8" cy="9.2" r="5.4" fill="none" stroke="#c4c4c4" stroke-width="1.3"/>
<path d="M5.8,1.6 H9.8 M7.8,1.6 V3.8" stroke="#c4c4c4" stroke-width="1.3"/>
<path d="M11.6,3.6 L13,5" stroke="#c4c4c4" stroke-width="1.2"/>
</svg>
<div style="left:142px;top:468px;width:153px;height:17px;background:#404040;"></div>
<span style="left:144.49px;top:471.83px;font-family:'Liberation Sans', sans-serif;font-size:12.61px;line-height:12.61px;font-weight:400;color:#b5b5b5;transform:scaleX(0.9050);transform-origin:0 0;-webkit-text-stroke:0.25px #b5b5b5;">Scale</span>
<div style="left:297px;top:469px;width:15px;height:15px;background:#1e1e1e;"></div>
<svg style="left:297px;top:471px;" width="16" height="10" viewBox="0 0 16 10">
<path d="M6.4,2.4 H4.2 Q1.9,2.4 1.9,4.9 Q1.9,7.4 4.2,7.4 H6.4 M9.6,2.4 H11.8 Q14.1,2.4 14.1,4.9 Q14.1,7.4 11.8,7.4 H9.6 M5.4,4.9 H10.6" fill="none" stroke="#c4c4c4" stroke-width="1.3"/>
</svg>
<span style="left:317.11px;top:470.58px;font-family:'Liberation Sans', sans-serif;font-size:12.43px;line-height:12.43px;font-weight:400;color:#4a9ff0;transform:scaleX(0.9571);transform-origin:0 0;-webkit-text-stroke:0.25px #4a9ff0;">197.0,197.0</span>
<span style="left:380.15px;top:470.58px;font-family:'Liberation Sans', sans-serif;font-size:12.43px;line-height:12.43px;font-weight:400;color:#b5b5b5;transform:scaleX(0.8095);transform-origin:0 0;-webkit-text-stroke:0.25px #b5b5b5;">%</span>
<svg style="left:488px;top:469px;" width="15" height="15" viewBox="0 0 15 15">
<path d="M7.57,6.37 L7.52,6.28 L7.46,6.20 L7.38,6.13 L7.28,6.07 L7.18,6.02 L7.05,5.99 L6.92,5.97 L6.79,5.98 L6.64,6.00 L6.50,6.05 L6.36,6.11 L6.22,6.21 L6.09,6.32 L5.98,6.45 L5.88,6.60 L5.79,6.78 L5.73,6.96 L5.70,7.16 L5.69,7.37 L5.70,7.59 L5.75,7.81 L5.83,8.03 L5.94,8.24 L6.07,8.44 L6.24,8.63 L6.44,8.79 L6.66,8.94 L6.90,9.06 L7.17,9.15 L7.45,9.21 L7.74,9.23 L8.03,9.21 L8.34,9.15 L8.63,9.06 L8.92,8.93 L9.20,8.75 L9.46,8.54 L9.69,8.29 L9.89,8.01 L10.07,7.70 L10.20,7.37 L10.29,7.01 L10.34,6.64 L10.34,6.26 L10.29,5.87 L10.20,5.49 L10.05,5.12 L9.86,4.76 L9.61,4.42 L9.33,4.11 L9.00,3.83 L8.63,3.59 L8.23,3.40 L7.81,3.26 L7.36,3.17 L6.90,3.13 L6.43,3.15 L5.95,3.23 L5.49,3.37 L5.04,3.58 L4.61,3.83 L4.22,4.15 L3.86,4.51 L3.54,4.92 L3.27,5.38 L3.06,5.87 L2.91,6.39 L2.82,6.93 L2.80,7.48 L2.85,8.04 L2.97,8.60 L3.16,9.14 L3.42,9.66 L3.75,10.15 L4.13,10.61 L4.58,11.01 L5.08,11.37 L5.62,11.66 L6.20,11.88 L6.81,12.04 L7.45,12.11 L8.09,12.11 L8.74,12.03 L9.38,11.87 L10.00,11.63 L10.59,11.31 L11.14,10.92 L11.65,10.45 L12.10,9.92 L12.48,9.34 L12.80,8.71 L13.03,8.03 L13.19,7.33 L13.25,6.60 L13.23,5.87 L13.11,5.13 L12.90,4.41 L12.60,3.72 L12.22,3.06 L11.75,2.45" fill="none" stroke="#bdbdbd" stroke-width="1.25" stroke-linecap="round"/>
</svg>
<div style="left:0px;top:486px;width:612px;height:90px;background:#262626;"></div>
<div style="left:612px;top:353px;width:412px;height:223px;background:#232323;"></div>
<div style="left:612px;top:360px;width:412px;height:11px;background:#161616;"></div>
<div style="left:620px;top:361px;width:404px;height:9px;background:#6b6b6b;"></div>
<svg style="left:612px;top:361px;" width="9" height="9" viewBox="0 0 9 9"><path d="M8.2,0.2 V8.8 H5.4 Q1.3,8.8 1.3,4.5 Q1.3,0.2 5.4,0.2 Z" fill="#3f8ff5"/></svg>
<div style="left:708px;top:361px;width:3px;height:9px;background:#5a8fd6;"></div>
<div style="left:612px;top:371px;width:412px;height:20px;background:#232323;"></div>
<div style="left:612px;top:371px;width:412px;height:20px;overflow:hidden">
<span style="left:-1.48px;top:3.05px;font-family:'Liberation Sans', sans-serif;font-size:10.57px;line-height:10.57px;font-weight:400;color:#9a9a9a;-webkit-text-stroke:0.25px #9a9a9a;">0:00s</span>
<span style="left:88.18px;top:3.05px;font-family:'Liberation Sans', sans-serif;font-size:10.57px;line-height:10.57px;font-weight:400;color:#9a9a9a;-webkit-text-stroke:0.25px #9a9a9a;">02s</span>
</div>
<div style="left:612px;top:371px;width:2.5px;height:13px;background:#232323;"></div>
<span style="left:788.58px;top:373.85px;font-family:'Liberation Sans', sans-serif;font-size:10.57px;line-height:10.57px;font-weight:400;color:#9c9c9c;-webkit-text-stroke:0.1px #9c9c9c;">04s</span>
<span style="left:876.88px;top:373.85px;font-family:'Liberation Sans', sans-serif;font-size:10.57px;line-height:10.57px;font-weight:400;color:#9c9c9c;-webkit-text-stroke:0.1px #9c9c9c;">06s</span>
<span style="left:964.58px;top:373.85px;font-family:'Liberation Sans', sans-serif;font-size:10.57px;line-height:10.57px;font-weight:400;color:#9c9c9c;-webkit-text-stroke:0.1px #9c9c9c;">08s</span>
<div style="left:621px;top:386px;width:1px;height:5px;background:#9a9a9a;"></div>
<div style="left:798px;top:386px;width:1px;height:5px;background:#9a9a9a;"></div>
<div style="left:886px;top:386px;width:1px;height:5px;background:#9a9a9a;"></div>
<div style="left:974px;top:386px;width:1px;height:5px;background:#9a9a9a;"></div>
<div style="left:621px;top:382px;width:1px;height:9px;background:#9a9a9a;"></div>
<div style="left:612px;top:391px;width:412px;height:2px;background:#161616;"></div>
<div style="left:612px;top:393px;width:412px;height:15px;background:#2a2a2a;"></div>
<div style="left:620px;top:393px;width:404px;height:15px;background:#6b6b6b;"></div>
<svg style="left:612px;top:393px;" width="9" height="15" viewBox="0 0 9 15"><path d="M8.5,0.3 V14.7 H6 Q2.1,14.7 2.1,10.5 V4.5 Q2.1,0.3 6,0.3 Z" fill="#3f8ff5"/></svg>
<div style="left:612px;top:408px;width:412px;height:6px;background:#1c1c1c;"></div>
<div style="left:621px;top:409px;width:397px;height:4px;background:#40b840;"></div>
<div style="left:612px;top:414px;width:412px;height:154px;background:#2d2d2d;"></div>
<div style="left:621px;top:414px;width:397px;height:17px;background:#7a4541;"></div>
<div style="left:612px;top:431px;width:412px;height:1px;background:#1c1c1c;"></div>
<div style="left:621px;top:432px;width:397px;height:17px;background:#57619a;"></div>
<div style="left:612px;top:449px;width:412px;height:1px;background:#1c1c1c;"></div>
<div style="left:612px;top:450px;width:9px;height:17px;background:#474747;"></div>
<div style="left:621px;top:450px;width:403px;height:17px;background:#a9a9c8;background:linear-gradient(#bdbcd4,#a9a9c8 40%,#a3a3c1)"></div>
<div style="left:621px;top:450px;width:1.5px;height:17px;background:#e6e6ee;"></div>
<div style="left:612px;top:467px;width:412px;height:1px;background:#1c1c1c;"></div>
<div style="left:612px;top:468px;width:412px;height:17px;background:#333333;"></div>
<div style="left:612px;top:485px;width:412px;height:1px;background:#1e1e1e;"></div>
<div style="left:612px;top:486px;width:412px;height:90px;background:#333333;"></div>
<div style="left:613px;top:468px;width:8px;height:108px;background:#2b2b2b;"></div>
<div style="left:612px;top:392px;width:1px;height:184px;background:#111111;"></div>
<svg style="left:703px;top:375px;" width="14" height="17" viewBox="0 0 14 17"><path d="M2.2,1 H11.8 Q13,1 13,2.2 V7.6 L7,16 L1,7.6 V2.2 Q1,1 2.2,1 Z" fill="#4a90f0"/><path d="M4.8,8.2 H9.2 M7,8.2 V13" stroke="#1d3357" stroke-width="1"/></svg>
<div style="left:709px;top:386px;width:1px;height:190px;background:#4a90f0;"></div>
<svg style="left:704px;top:469px;" width="12" height="16" viewBox="0 0 12 16"><path d="M2.2,2 H9.8 L7.6,4 V12 L9.8,14 H2.2 L4.4,12 V4 Z" fill="#4a90f0"/></svg>
</body></html>
